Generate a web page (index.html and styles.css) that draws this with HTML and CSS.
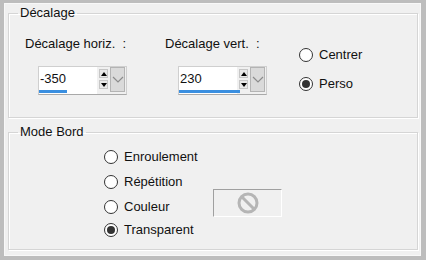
FILE: index.html
```html
<!DOCTYPE html>
<html lang="fr">
<head>
    <meta charset="UTF-8">
    <meta name="viewport" content="width=device-width, initial-scale=1.0">
    <title>Décalage</title>
    <link rel="stylesheet" href="styles.css">
</head>
<body>
    <div id="dialog">
        <fieldset class="group">
            <legend>Décalage</legend>
            <div id="offset-row">
                <div class="offset-col">
                    <div class="field-label">Décalage horiz. &nbsp;:</div>
                    <div class="spinner">
                        <div class="spin-field">
                            <span class="spin-value">-350</span>
                            <div class="spin-bar" style="width: 28px"></div>
                        </div>
                        <div class="spin-arrows">
                            <span class="arrow-btn"><span class="arrow-up"></span></span>
                            <span class="arrow-btn"><span class="arrow-down"></span></span>
                        </div>
                        <div class="spin-drop">
                            <svg width="12" height="7" viewBox="0 0 12 7"><polyline points="1,1 6,6 11,1" fill="none" stroke="#8c8c8c" stroke-width="1.2"/></svg>
                        </div>
                    </div>
                </div>
                <div class="offset-col second">
                    <div class="field-label">Décalage vert. &nbsp;:</div>
                    <div class="spinner">
                        <div class="spin-field">
                            <span class="spin-value">230</span>
                            <div class="spin-bar" style="width: 61px"></div>
                        </div>
                        <div class="spin-arrows">
                            <span class="arrow-btn"><span class="arrow-up"></span></span>
                            <span class="arrow-btn"><span class="arrow-down"></span></span>
                        </div>
                        <div class="spin-drop">
                            <svg width="12" height="7" viewBox="0 0 12 7"><polyline points="1,1 6,6 11,1" fill="none" stroke="#8c8c8c" stroke-width="1.2"/></svg>
                        </div>
                    </div>
                </div>
                <div class="radio-col">
                    <div class="radio-row"><span class="radio"></span>Centrer</div>
                    <div class="radio-row"><span class="radio checked"></span>Perso</div>
                </div>
            </div>
        </fieldset>

        <fieldset class="group" id="mode-group">
            <legend>Mode Bord</legend>
            <div id="mode-grid">
                <div class="radio-row"><span class="radio"></span>Enroulement</div>
                <div class="radio-row"><span class="radio"></span>Répétition</div>
                <div class="radio-row"><span class="radio"></span>Couleur</div>
                <div class="radio-row last"><span class="radio checked"></span>Transparent</div>
                <div class="swatch">
                    <svg width="24" height="24" viewBox="0 0 24 24">
                        <circle cx="12" cy="12" r="9" fill="none" stroke="#b5b5b5" stroke-width="3"/>
                        <line x1="6" y1="6" x2="18" y2="18" stroke="#b5b5b5" stroke-width="3"/>
                    </svg>
                </div>
            </div>
        </fieldset>
    </div>
</body>
</html>
```

FILE: styles.css
```css
body {
    margin: 0;
    font-family: "Liberation Sans", Arial, sans-serif;
    font-size: 13px;
    color: #111;
}
#dialog {
    width: 426px;
    height: 260px;
    box-sizing: border-box;
    border-style: solid;
    border-color: #bdbdbd;
    border-width: 3px 5px 4px 4px;
    background-color: #f0f0f0;
    box-shadow: inset 0 0 0 1px #f8f8f8;
    padding: 2px 3px 0 4px;
}
.group {
    margin: 0;
    padding: 0;
    border: 1px solid #d5d5d5;
    box-shadow: inset 1px 1px 0 #fff, 1px 1px 0 #fff;
}
.group legend {
    margin-left: 9px;
    padding: 0 2px;
    line-height: 16px;
}
#offset-row {
    display: flex;
    padding: 15px 0 22px 16px;
}
.offset-col {
    width: 140px;
}
.offset-col.second {
    width: 133px;
}
.field-label {
    line-height: 16px;
}
.spinner {
    display: flex;
    width: 89px;
    height: 29px;
    box-sizing: border-box;
    margin: 14px 0 0 13px;
    border: 1px solid #cfcfcf;
    border-bottom-color: #a9a9a9;
    background-color: #f0f0f0;
}
.spin-field {
    width: 58px;
    display: flex;
    flex-direction: column;
    justify-content: space-between;
    background-color: #fff;
}
.spin-value {
    padding: 4px 0 0 1px;
    line-height: 16px;
}
.spin-bar {
    height: 3px;
    margin: 0 0 1px 0;
    background-color: #3a8fe0;
}
.spin-arrows {
    width: 13px;
    display: flex;
    flex-direction: column;
    align-items: center;
    gap: 2px;
    padding-top: 2px;
}
.arrow-btn {
    width: 9px;
    height: 9px;
    box-sizing: border-box;
    border: 1px solid #c6c6c6;
    background-color: #e8e8e8;
    display: flex;
    align-items: center;
    justify-content: center;
}
.arrow-up {
    border-left: 3px solid transparent;
    border-right: 3px solid transparent;
    border-bottom: 4px solid #000;
}
.arrow-down {
    border-left: 3px solid transparent;
    border-right: 3px solid transparent;
    border-top: 4px solid #000;
}
.spin-drop {
    width: 15px;
    height: 25px;
    box-sizing: border-box;
    border: 1px solid #b4b4b4;
    background-color: #dadada;
    display: flex;
    align-items: center;
    justify-content: center;
}
.radio-col {
    display: flex;
    flex-direction: column;
    gap: 13px;
    padding-top: 11px;
    padding-left: 1px;
}
.radio-row {
    display: flex;
    align-items: center;
    gap: 6px;
    line-height: 16px;
}
.radio {
    width: 14px;
    height: 14px;
    box-sizing: border-box;
    border: 1px solid #333;
    border-radius: 50%;
    background-color: #fff;
    display: flex;
    align-items: center;
    justify-content: center;
}
.radio.checked::after {
    content: "";
    width: 8px;
    height: 8px;
    border-radius: 50%;
    background-color: #333;
}
#mode-group {
    margin-top: 6px;
}
#mode-grid {
    display: grid;
    grid-template-columns: 109px 69px;
    row-gap: 9px;
    padding: 9px 0 9px 95px;
}
#mode-grid .radio-row {
    grid-column: 1;
}
#mode-grid .radio-row.last {
    margin: -2px 0 2px;
}
.swatch {
    grid-column: 2;
    grid-row: 3;
    height: 28px;
    box-sizing: border-box;
    margin: -10px 0 -2px;
    border: 1px solid #fff;
    border-top-color: #a0a0a0;
    border-left-color: #a0a0a0;
    display: flex;
    align-items: center;
    justify-content: center;
}
```
